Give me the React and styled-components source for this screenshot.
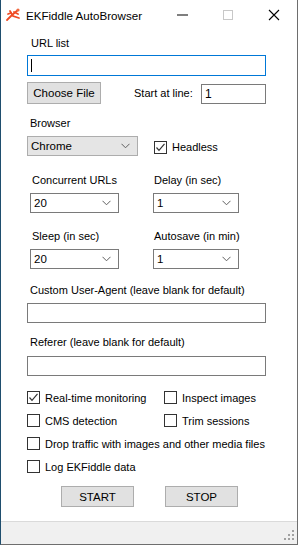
import React from 'react';
import styled, { createGlobalStyle } from 'styled-components';

const GlobalStyle = createGlobalStyle`
  html, body {
    margin: 0;
    padding: 0;
    background: #ffffff;
  }
  * {
    box-sizing: border-box;
  }
`;

const Window = styled.div`
  width: 298px;
  height: 545px;
  display: flex;
  flex-direction: column;
  background: #ffffff;
  border-left: 1px solid #1f4e6e;
  border-right: 1px solid #6e6e6e;
  border-bottom: 1px solid #6e6e6e;
  font-family: 'Liberation Sans', Arial, sans-serif;
  font-size: 11px;
  color: #000;
`;

const TitleBar = styled.div`
  height: 30px;
  display: flex;
  align-items: center;
  flex-shrink: 0;
`;

const AppIcon = styled.div`
  width: 16px;
  height: 16px;
  margin-left: 4px;
  display: flex;
`;

const Title = styled.span`
  margin-left: 5px;
  font-size: 11.6px;
  color: #000;
  flex: 1;
`;

const CaptionButton = styled.div`
  width: 46px;
  height: 30px;
  display: flex;
  align-items: center;
  justify-content: center;
`;

const Content = styled.div`
  flex: 1;
  display: flex;
  flex-direction: column;
  padding: 6px 31px 0 26px;
`;

const Label = styled.div`
  height: 14px;
  line-height: 14px;
  padding-left: ${p => p.$indent || 3}px;
  margin-top: ${p => p.$top || 0}px;
  white-space: nowrap;
`;

const TextBox = styled.div`
  height: ${p => p.$h || 20}px;
  width: ${p => p.$w ? p.$w + 'px' : '100%'};
  border: 1px solid ${p => (p.$focus ? '#0078d7' : '#7a7a7a')};
  background: #fff;
  display: flex;
  align-items: center;
  padding-left: 3px;
  margin-top: ${p => p.$top || 0}px;
  font-size: 12px;
`;

const Caret = styled.span`
  width: 1px;
  height: 13px;
  background: #000;
`;

const Row = styled.div`
  display: flex;
  align-items: ${p => p.$align || 'center'};
  margin-top: ${p => p.$top || 0}px;
`;

const Button = styled.div`
  width: ${p => p.$w}px;
  height: ${p => p.$h || 21}px;
  background: #e1e1e1;
  border: 1px solid #adadad;
  display: flex;
  align-items: center;
  justify-content: center;
  font-size: 11.5px;
`;

const Combo = styled.div`
  width: ${p => p.$w}px;
  height: 20px;
  border: 1px solid ${p => (p.$flat ? '#adadad' : '#7a7a7a')};
  background: ${p => (p.$flat ? '#e5e5e5' : '#ffffff')};
  display: flex;
  align-items: center;
  justify-content: space-between;
  padding: 0 7px 0 3px;
  font-size: 11.5px;
`;

const Grid = styled.div`
  display: grid;
  grid-template-columns: 123px 1fr;
  margin-top: ${p => p.$top || 0}px;
  padding-left: 3px;
`;

const Cell = styled.div`
  display: flex;
  flex-direction: column;
  gap: 6px;
`;

const CheckRow = styled.div`
  display: flex;
  align-items: center;
  height: 13px;
  margin-top: ${p => p.$top || 0}px;
`;

const Check = styled.label`
  display: flex;
  align-items: center;
  width: ${p => (p.$w ? p.$w + 'px' : 'auto')};
  white-space: nowrap;
  font-size: 11px;
`;

const Box = styled.span`
  width: 13px;
  height: 13px;
  border: 1px solid #333;
  background: #fff;
  margin-right: 5px;
  display: flex;
  align-items: center;
  justify-content: center;
  flex-shrink: 0;
`;

const ButtonRow = styled.div`
  display: flex;
  gap: 31px;
  margin-top: 13px;
  padding-left: 34px;
`;

const StatusBar = styled.div`
  height: 23px;
  background: #f0f0f0;
  border-top: 1px solid #dadada;
  display: flex;
  justify-content: flex-end;
  align-items: flex-end;
  padding: 0 1px 2px 0;
  flex-shrink: 0;
`;

const Chevron = () => (
  <svg width="9" height="6" viewBox="0 0 9 6">
    <path d="M0.5 0.8 L4.5 4.8 L8.5 0.8" fill="none" stroke="#606060" strokeWidth="1" />
  </svg>
);

const Tick = () => (
  <svg width="11" height="11" viewBox="0 0 11 11">
    <path d="M1.5 5.5 L4 8.3 L9.5 1.8" fill="none" stroke="#333" strokeWidth="1.2" />
  </svg>
);

const CheckBox = ({ checked, label, w }) => (
  <Check $w={w}>
    <Box>{checked && <Tick />}</Box>
    {label}
  </Check>
);

const App = () => (
  <>
    <GlobalStyle />
    <Window>
      <TitleBar>
        <AppIcon>
          <svg width="16" height="16" viewBox="0 0 16 16">
            <g fill="none" stroke="#ef4b24" strokeWidth="1.8" strokeLinecap="round">
              <path d="M2 13 L7 8 L13 3" />
              <path d="M5 4 L8 9 L14 11" />
              <path d="M9 5 L13 7" />
              <path d="M3 7 L6 6" />
            </g>
            <circle cx="13" cy="3" r="1.6" fill="#f06a40" />
          </svg>
        </AppIcon>
        <Title>EKFiddle AutoBrowser</Title>
        <CaptionButton>
          <svg width="12" height="2" viewBox="0 0 12 2">
            <rect x="1" y="0.5" width="11" height="1" fill="#000" />
          </svg>
        </CaptionButton>
        <CaptionButton>
          <svg width="11" height="11" viewBox="0 0 11 11">
            <rect x="0.5" y="0.5" width="9" height="9" fill="none" stroke="#c8c8c8" />
          </svg>
        </CaptionButton>
        <CaptionButton>
          <svg width="12" height="12" viewBox="0 0 12 12">
            <path d="M1 1 L11 11 M11 1 L1 11" stroke="#000" strokeWidth="1.1" />
          </svg>
        </CaptionButton>
      </TitleBar>

      <Content>
        <Label $indent={4}>URL list</Label>
        <TextBox $focus $h={21} $top={5}>
          <Caret />
        </TextBox>
        <Row $top={6}>
          <Button $w={74} $h={22}>Choose File</Button>
          <Label $indent={33}>Start at line:</Label>
          <TextBox $w={65} $top={2} style={{ marginLeft: 'auto' }}>1</TextBox>
        </Row>

        <Label $top={12}>Browser</Label>
        <Row $top={6}>
          <Combo $w={111} $flat>
            Chrome
            <Chevron />
          </Combo>
          <Check style={{ marginLeft: 16, marginTop: 2 }}>
            <Box><Tick /></Box>
            Headless
          </Check>
        </Row>

        <Grid $top={17}>
          <Cell>
            <Label $indent={2}>Concurrent URLs</Label>
            <Combo $w={89}>20<Chevron /></Combo>
          </Cell>
          <Cell>
            <Label $indent={1}>Delay (in sec)</Label>
            <Combo $w={86}>1<Chevron /></Combo>
          </Cell>
        </Grid>
        <Grid $top={16}>
          <Cell>
            <Label $indent={2}>Sleep (in sec)</Label>
            <Combo $w={89}>20<Chevron /></Combo>
          </Cell>
          <Cell>
            <Label $indent={1}>Autosave (in min)</Label>
            <Combo $w={86}>1<Chevron /></Combo>
          </Cell>
        </Grid>

        <Label $top={14}>Custom User-Agent (leave blank for default)</Label>
        <TextBox $top={6} />
        <Label $top={12}>Referer (leave blank for default)</Label>
        <TextBox $top={7} />

        <CheckRow $top={15}>
          <CheckBox checked w={137} label="Real-time monitoring" />
          <CheckBox label="Inspect images" />
        </CheckRow>
        <CheckRow $top={10}>
          <CheckBox w={137} label="CMS detection" />
          <CheckBox label="Trim sessions" />
        </CheckRow>
        <CheckRow $top={10}>
          <CheckBox label="Drop traffic with images and other media files" />
        </CheckRow>
        <CheckRow $top={10}>
          <CheckBox label="Log EKFiddle data" />
        </CheckRow>

        <ButtonRow>
          <Button $w={73}>START</Button>
          <Button $w={73}>STOP</Button>
        </ButtonRow>
      </Content>

      <StatusBar>
        <svg width="12" height="12" viewBox="0 0 12 12">
          <g fill="#a0a0a0">
            <rect x="8" y="0" width="2" height="2" />
            <rect x="4" y="4" width="2" height="2" />
            <rect x="8" y="4" width="2" height="2" />
            <rect x="0" y="8" width="2" height="2" />
            <rect x="4" y="8" width="2" height="2" />
            <rect x="8" y="8" width="2" height="2" />
          </g>
        </svg>
      </StatusBar>
    </Window>
  </>
);

export default App;
